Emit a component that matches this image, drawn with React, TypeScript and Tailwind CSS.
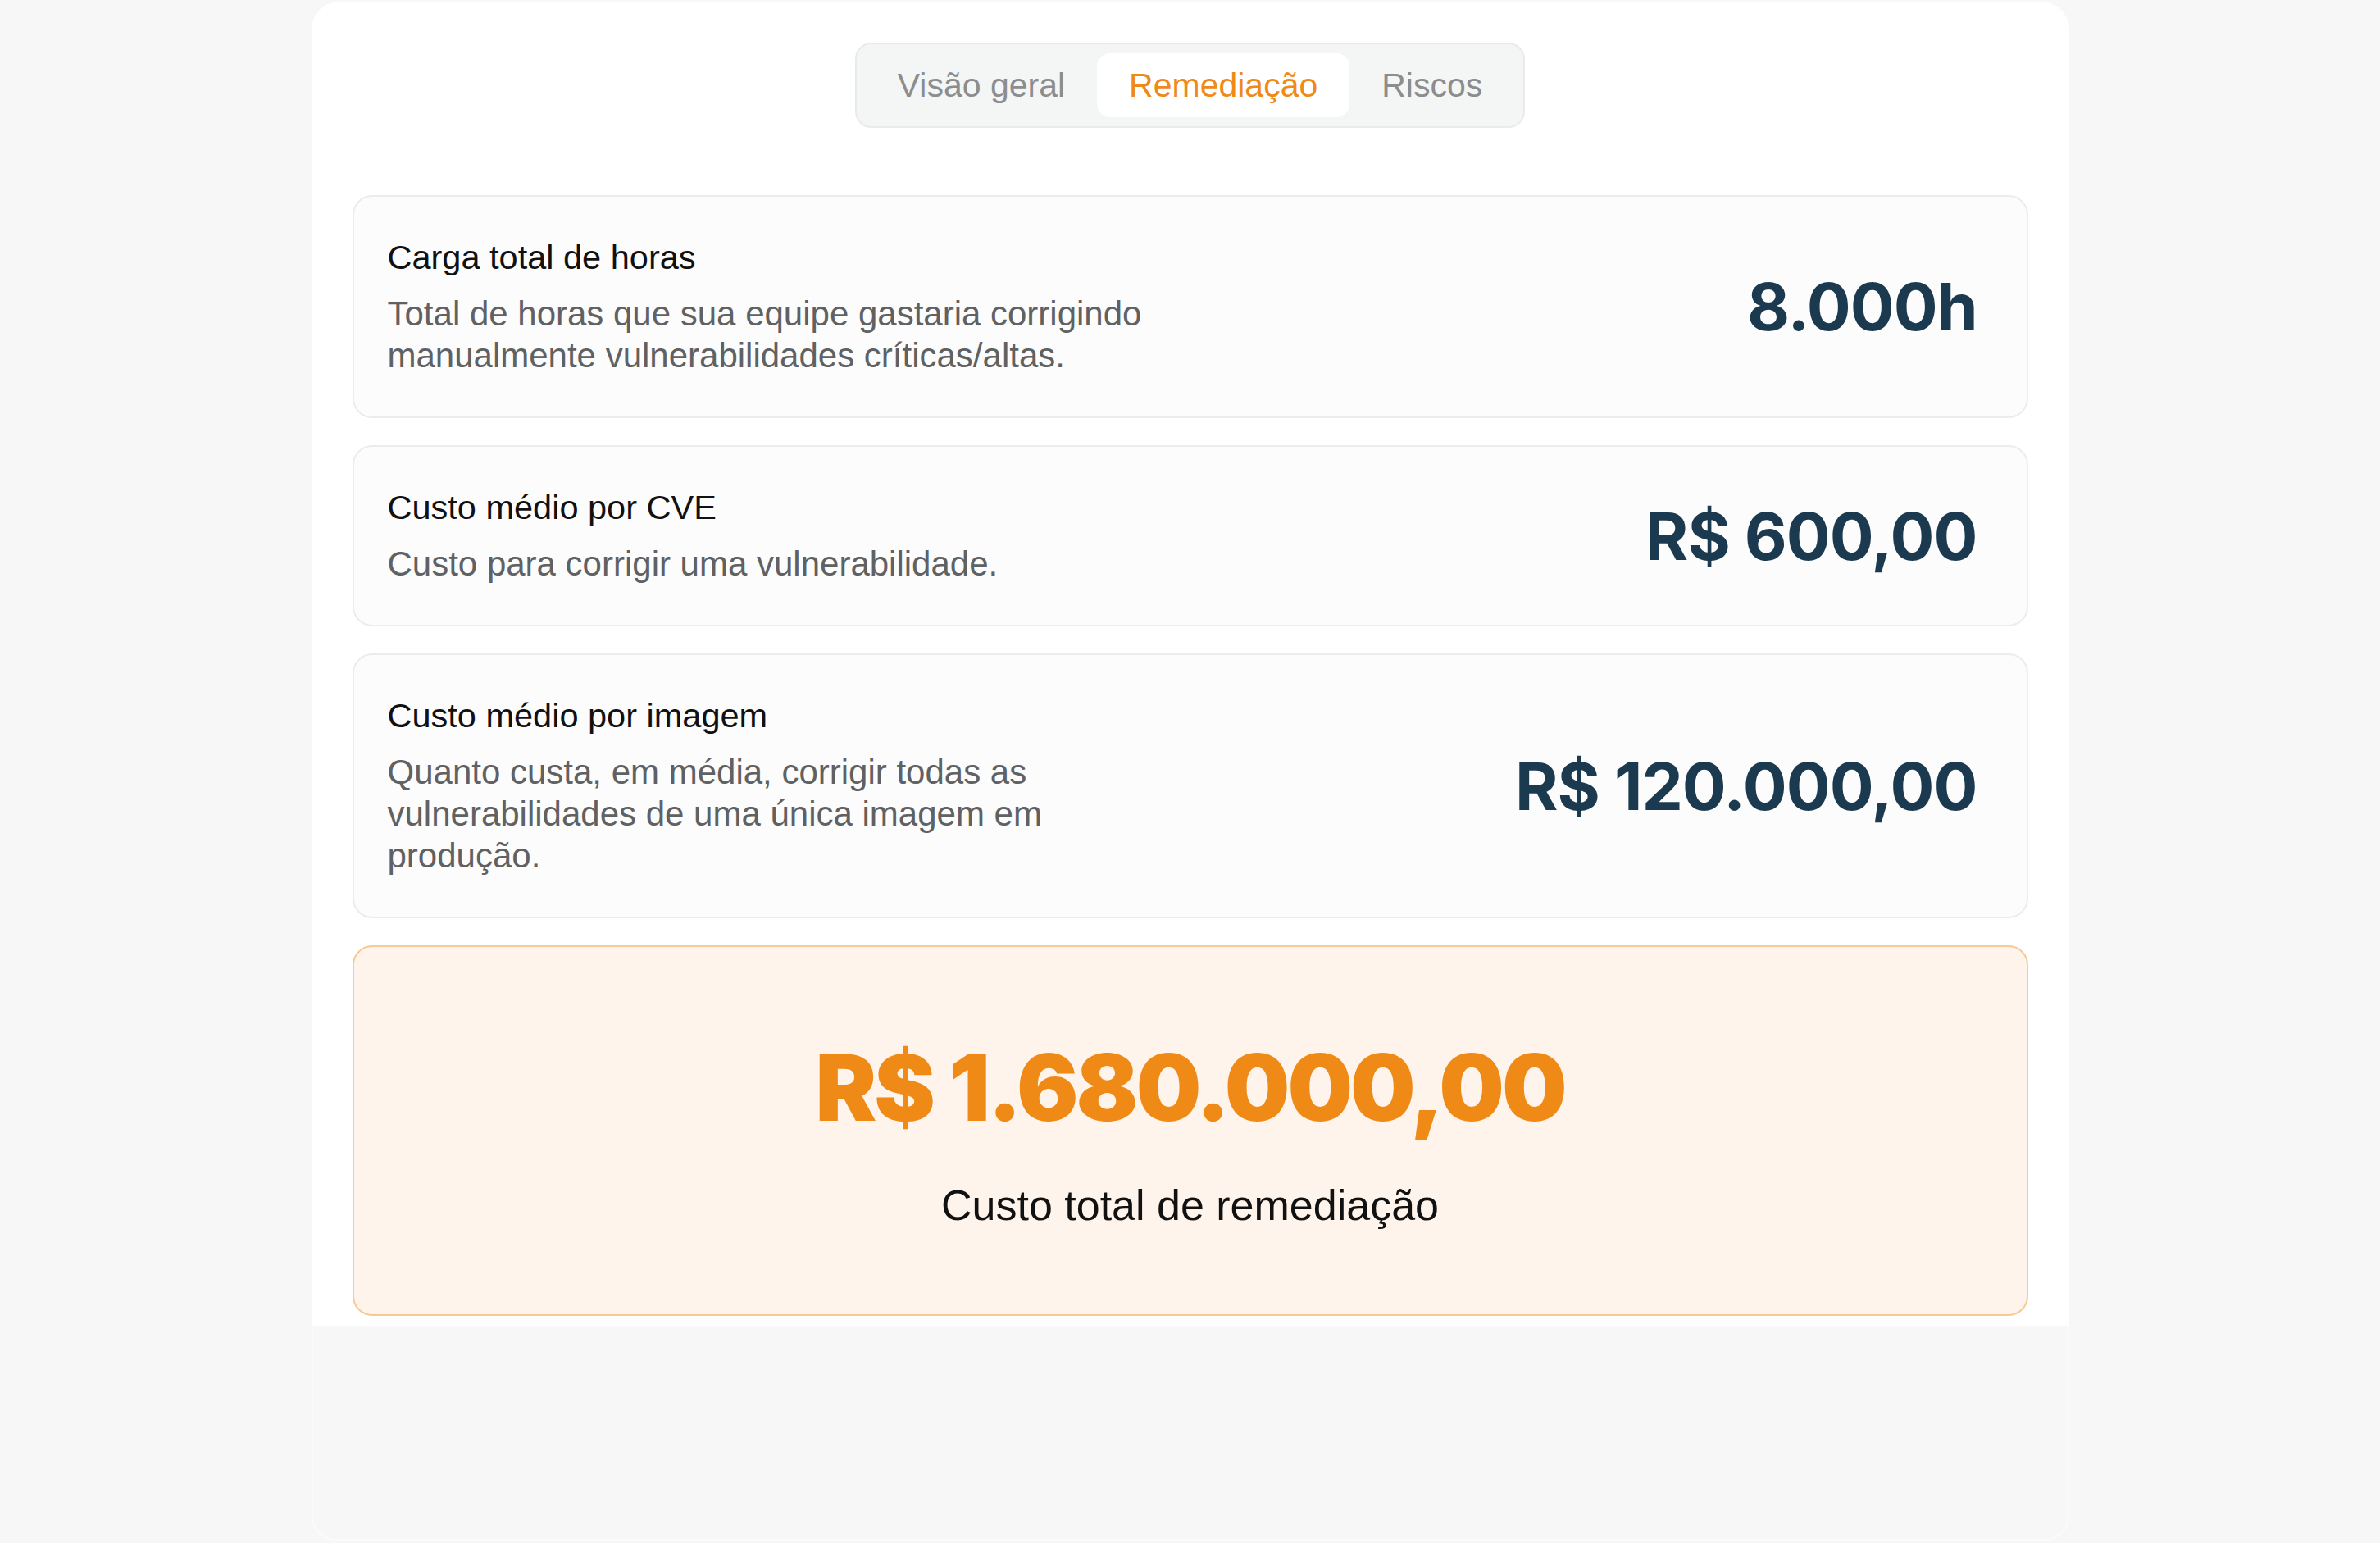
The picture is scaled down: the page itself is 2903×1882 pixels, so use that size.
import React from 'react';

const tabs = ['Visão geral', 'Remediação', 'Riscos'];

const items = [
  {
    title: 'Carga total de horas',
    text: 'Total de horas que sua equipe gastaria corrigindo manualmente vulnerabilidades críticas/altas.',
    value: '8.000h',
  },
  {
    title: 'Custo médio por CVE',
    text: 'Custo para corrigir uma vulnerabilidade.',
    value: 'R$ 600,00',
  },
  {
    title: 'Custo médio por imagem',
    text: 'Quanto custa, em média, corrigir todas as vulnerabilidades de uma única imagem em produção.',
    value: 'R$ 120.000,00',
  },
];

const Tabs = () => (
  <div className="flex justify-center">
    <div className="flex items-center rounded-[20px] border-2 border-[#e9ebea] bg-[#f4f5f5] p-[11px]">
      {tabs.map((t) => (
        <div
          key={t}
          className={
            t === 'Remediação'
              ? 'rounded-[16px] bg-white px-[39px] text-[41px] leading-[78px] font-medium text-[#ef8a17]'
              : 'px-[39px] text-[41px] leading-[78px] text-[#8b8d8e]'
          }
        >
          {t}
        </div>
      ))}
    </div>
  </div>
);

const StatCard = ({ title, text, value }: { title: string; text: string; value: string }) => (
  <div className="flex items-center justify-between rounded-[24px] border-2 border-[#ebecec] bg-[#fcfcfc] py-[49px] pl-[41px] pr-[60px]">
    <div className="max-w-[940px]">
      <div className="text-[41.5px] leading-[50px] text-[#111111]">{title}</div>
      <div className="mt-[18px] text-[42px] leading-[51px] text-[#5f6163]">{text}</div>
    </div>
    <div className="font-['Inter',sans-serif] text-[80px] font-bold leading-none tracking-[-1px] text-[#1b3a4f]">
      {value}
    </div>
  </div>
);

export default function App() {
  return (
    <div className="min-h-screen bg-[#f6f7f6] font-['Liberation_Sans',Arial,sans-serif]">
      <div className="mx-auto w-[2144px] pt-[2px]">
        <div className="rounded-t-[34px] bg-white px-[50px] pt-[50px] pb-[12px]">
          <Tabs />
          <div className="mt-[82px] flex flex-col gap-[33px]">
            {items.map((it) => (
              <StatCard key={it.title} {...it} />
            ))}
            <div className="flex flex-col items-center rounded-[24px] border-2 border-[#f6c995] bg-[#fef4ec] pt-[106px] pb-[101px]">
              <div className="font-['Inter',sans-serif] text-[112px] font-black leading-[130px] tracking-[-3px] text-[#ef8a17]">
                R$ 1.680.000,00
              </div>
              <div className="mt-[47px] text-[52px] leading-[64px] text-[#111111]">Custo total de remediação</div>
            </div>
          </div>
        </div>
        <div className="h-[262px] rounded-b-[30px] border-x-2 border-b-2 border-[#fbfbfb] bg-[#f6f7f6]" />
      </div>
    </div>
  );
}
